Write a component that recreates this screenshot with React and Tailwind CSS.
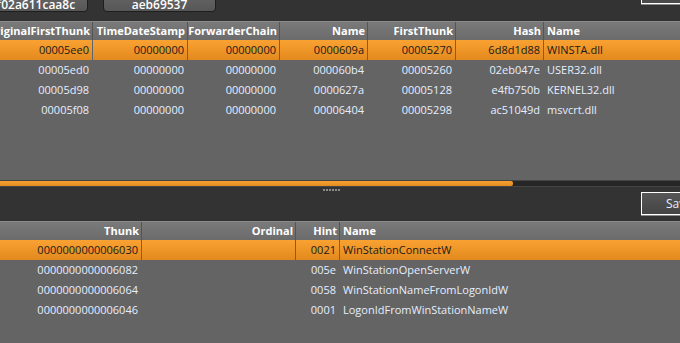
import React from 'react';

const topCols = [
    { label: 'OriginalFirstThunk', w: 'w-[113px]', align: 'right' },
    { label: 'TimeDateStamp', w: 'w-[95px]', align: 'right' },
    { label: 'ForwarderChain', w: 'w-[92px]', align: 'right' },
    { label: 'Name', w: 'w-[88px]', align: 'right' },
    { label: 'FirstThunk', w: 'w-[88px]', align: 'right' },
    { label: 'Hash', w: 'w-[88px]', align: 'right' },
    { label: 'Name', w: 'flex-1', align: 'left' },
];

const topRows = [
    ['00005ee0', '00000000', '00000000', '0000609a', '00005270', '6d8d1d88', 'WINSTA.dll'],
    ['00005ed0', '00000000', '00000000', '000060b4', '00005260', '02eb047e', 'USER32.dll'],
    ['00005d98', '00000000', '00000000', '0000627a', '00005128', 'e4fb750b', 'KERNEL32.dll'],
    ['00005f08', '00000000', '00000000', '00006404', '00005298', 'ac51049d', 'msvcrt.dll'],
];

const bottomCols = [
    { label: 'Thunk', w: 'w-[142px]', align: 'right' },
    { label: 'Ordinal', w: 'w-[154px]', align: 'right' },
    { label: 'Hint', w: 'w-[44px]', align: 'right' },
    { label: 'Name', w: 'flex-1', align: 'left' },
];

const bottomRows = [
    ['0000000000006030', '', '0021', 'WinStationConnectW'],
    ['0000000000006082', '', '005e', 'WinStationOpenServerW'],
    ['0000000000006064', '', '0058', 'WinStationNameFromLogonIdW'],
    ['0000000000006046', '', '0001', 'LogonIdFromWinStationNameW'],
];

const Header = ({ cols }) => (
    <div className="flex h-[19px] shrink-0 border-t border-[#8a8a8a] bg-gradient-to-b from-[#7a7a7a] to-[#6b6b6b]">
        {cols.map((c, i) => (
            <div
                key={i}
                className={`${c.w} shrink-0 flex items-center whitespace-nowrap overflow-hidden font-bold text-white text-[11px] ${
                    c.align === 'right' ? 'justify-end pr-[2px] border-r border-[#555]' : 'justify-start pl-[3px]'
                }`}
            >
                {c.label}
            </div>
        ))}
    </div>
);

const Row = ({ cols, row, selected }) => (
    <div
        className={`flex h-[20px] shrink-0 ${
            selected ? 'bg-gradient-to-b from-[#f9a232] to-[#e3891d] text-[#1a1a1a]' : 'text-[#e6eeff]'
        }`}
    >
        {cols.map((c, i) => (
            <div
                key={i}
                className={`${c.w} shrink-0 flex items-center whitespace-nowrap overflow-hidden text-[11px] ${
                    c.align === 'right' ? 'justify-end pr-[3px]' : 'justify-start pl-[3px]'
                } ${selected && c.align === 'right' ? 'border-r border-[#5b6675]' : 'border-r border-transparent'}`}
            >
                {row[i]}
            </div>
        ))}
    </div>
);

export default function App() {
    return (
        <div
            className="w-[680px] h-[343px] overflow-hidden bg-[#333333] flex flex-col"
            style={{ fontFamily: '"Open Sans", "Liberation Sans", sans-serif' }}
        >
            {/* top strip with hash buttons */}
            <div className="h-[21px] shrink-0 flex items-start">
                <div className="ml-[-16px] mt-[-9px] w-[104px] h-[21px] rounded-b-[4px] border border-[#1e1e1e] bg-gradient-to-b from-[#666] to-[#575757] flex items-start justify-center text-white text-[12px] leading-[12px] font-semibold pt-[7px]">
                    f02a611caa8c
                </div>
                <div className="ml-[15px] mt-[-9px] w-[113px] h-[21px] rounded-b-[4px] border border-[#1e1e1e] bg-gradient-to-b from-[#666] to-[#575757] flex items-start justify-center text-white text-[12px] leading-[12px] font-semibold pt-[7px]">
                    aeb69537
                </div>
                <div className="ml-auto mt-[-20px] w-[45px] h-[24px] mr-[-6px] border border-white bg-[#4a4a4a] shadow-[0_1px_0_#8a8a8a]"></div>
            </div>

            {/* upper table */}
            <div className="h-[159px] shrink-0 flex flex-col bg-[#646464] ml-[-20px]">
                <Header cols={topCols} />
                {topRows.map((r, i) => (
                    <Row key={i} cols={topCols} row={r} selected={i === 0} />
                ))}
            </div>

            {/* horizontal scrollbar */}
            <div className="h-[7px] shrink-0 flex flex-col bg-[#262626] border-t border-[#2a2a2a] border-b border-[#444]">
                <div className="h-[5px] w-[513px] rounded-r-[2px] bg-gradient-to-b from-[#f6a030] to-[#e48c22]"></div>
            </div>

            {/* splitter */}
            <div className="h-[34px] shrink-0 flex flex-col">
                <div className="flex gap-[1px] mt-[2px] ml-[323px]">
                    {[0, 1, 2, 3, 4, 5].map((d) => (
                        <div key={d} className="w-[2px] h-[2px] bg-[#8a8a8a]"></div>
                    ))}
                </div>
                <div className="flex justify-end mt-[1px]">
                    <div className="w-[46px] h-[23px] mr-[-7px] border border-white bg-gradient-to-b from-[#575757] to-[#444] shadow-[0_1px_0_#8a8a8a] flex items-center pl-[24px] text-[12px] text-[#e6eeff]">
                        Save
                    </div>
                </div>
            </div>

            {/* lower table */}
            <div className="flex-1 flex flex-col bg-[#646464]">
                <Header cols={bottomCols} />
                {bottomRows.map((r, i) => (
                    <Row key={i} cols={bottomCols} row={r} selected={i === 0} />
                ))}
            </div>
        </div>
    );
}
